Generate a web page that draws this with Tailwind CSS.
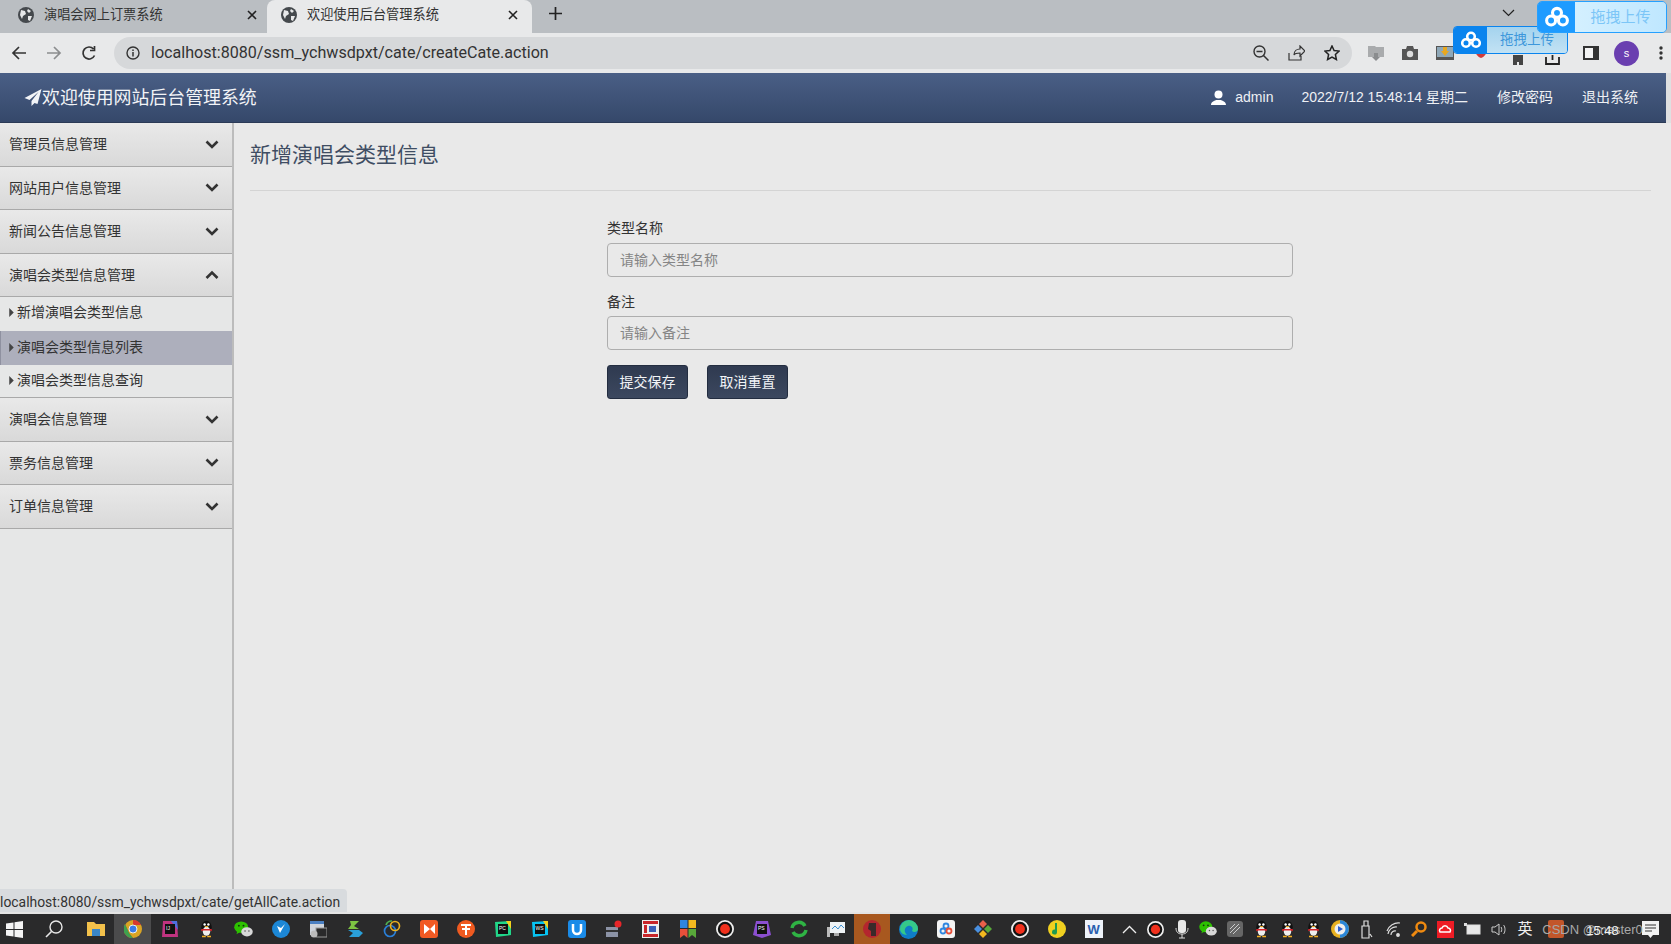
<!DOCTYPE html>
<html lang="zh-CN">
<head>
  <meta charset="UTF-8" />
  <title>欢迎使用后台管理系统</title>
  <script src="https://cdn.jsdelivr.net/npm/@tailwindcss/browser@4"></script>
</head>
<body class="relative h-[944px] w-[1671px] overflow-hidden flex flex-col bg-[#e9e9e9] text-[#333] font-['Liberation_Sans','Noto_Sans_CJK_SC',sans-serif]">

  <svg width="0" height="0" class="absolute">
    <defs>
      <symbol id="globe" viewBox="0 0 16 16"><circle cx="8" cy="8" r="8" fill="#45494d"/><path d="M3 3l4 1 1 3-3 2-1 3-2-4zM10 2l3 2-2 2-2-2zM10 9l4 0-2 5-2-1z" fill="#e8e9ea"/></symbol>
      <symbol id="qq" viewBox="0 0 20 24"><ellipse cx="10" cy="10" rx="7" ry="9" fill="#111"/><ellipse cx="10" cy="15" rx="5" ry="6" fill="#eee"/><circle cx="7.5" cy="6" r="1.6" fill="#fff"/><circle cx="12.5" cy="6" r="1.6" fill="#fff"/><path d="M7 8h6l-3 2z" fill="#f5b021"/><path d="M3 12h14v3l-3-1H6l-3 1z" fill="#d8232a"/><path d="M4 21h5v2H4zM11 21h5v2h-5z" fill="#f5b021"/></symbol>
      <symbol id="wechat" viewBox="0 0 24 22"><ellipse cx="9" cy="8" rx="9" ry="7.5" fill="#2dc100"/><path d="M4 13l-1 4 5-3z" fill="#2dc100"/><ellipse cx="16.5" cy="14" rx="7.5" ry="6" fill="#d8d8d8"/><circle cx="6" cy="6" r="1.2" fill="#12300a"/><circle cx="12" cy="6" r="1.2" fill="#12300a"/><circle cx="14" cy="13" r="1" fill="#555"/><circle cx="19" cy="13" r="1" fill="#555"/></symbol>
      <symbol id="rec" viewBox="0 0 20 20"><circle cx="10" cy="10" r="9" fill="#111" stroke="#eee" stroke-width="2"/><circle cx="10" cy="10" r="5.5" fill="#f0301c"/></symbol>
    </defs>
  </svg>

  <!-- browser tabs -->
  <div class="h-[33px] shrink-0 bg-[#babec2] flex items-end text-[13.2px] text-[#333]">
    <div class="w-[267px] h-[33px] flex items-center pl-[18px] pr-[10px]">
      <svg class="w-[16px] h-[16px] mr-[10px] -mt-1"><use href="#globe"/></svg>
      <span class="-mt-1">演唱会网上订票系统</span>
      <svg class="ml-auto -mt-1" width="10" height="10" viewBox="0 0 10 10"><path d="M1 1l8 8M9 1l-8 8" stroke="#222" stroke-width="1.6"/></svg>
    </div>
    <div class="w-[265px] h-[33px] bg-[#e8e9ea] rounded-t-lg flex items-center pl-[14px] pr-[14px]">
      <svg class="w-[16px] h-[16px] mr-[10px] -mt-1"><use href="#globe"/></svg>
      <span class="-mt-1">欢迎使用后台管理系统</span>
      <svg class="ml-auto -mt-1" width="10" height="10" viewBox="0 0 10 10"><path d="M1 1l8 8M9 1l-8 8" stroke="#222" stroke-width="1.6"/></svg>
    </div>
    <svg class="ml-[17px] mb-[13px]" width="13" height="13" viewBox="0 0 13 13"><path d="M6.5 0v13M0 6.5h13" stroke="#222" stroke-width="1.7"/></svg>
    <svg class="ml-[940px] mb-[16px]" width="13" height="8" viewBox="0 0 13 8"><path d="M1 1l5.5 5.5L12 1" fill="none" stroke="#222" stroke-width="1.2"/></svg>
  </div>

  <!-- browser toolbar -->
  <div class="h-[40px] shrink-0 bg-[#e8e9ea] flex items-center">
    <svg class="ml-[11px]" width="16" height="16" viewBox="0 0 16 16"><path d="M15 8H2M8 2L2 8l6 6" fill="none" stroke="#333" stroke-width="1.7"/></svg>
    <svg class="ml-[19px]" width="16" height="16" viewBox="0 0 16 16"><path d="M1 8h13M8 2l6 6-6 6" fill="none" stroke="#8b8d8f" stroke-width="1.7"/></svg>
    <svg class="ml-[19px]" width="16" height="16" viewBox="0 0 16 16"><path d="M13.5 10.5A6 6 0 1 1 12.5 4M13.5 1v4.5H9" fill="none" stroke="#333" stroke-width="1.7"/></svg>
    <div class="ml-[17px] w-[1238px] h-[32px] rounded-full bg-[#d6d8da] flex items-center pl-[12px] pr-[12px]">
      <svg width="14" height="14" viewBox="0 0 14 14"><circle cx="7" cy="7" r="6" fill="none" stroke="#333" stroke-width="1.4"/><path d="M7 6v4.500M7 3.500v1.500" stroke="#333" stroke-width="1.5"/></svg>
      <span class="ml-[11px] text-[16.1px] text-[#333] font-['Roboto',sans-serif]">localhost:8080/ssm_ychwsdpxt/cate/createCate.action</span>
      <svg class="ml-auto mr-[19px]" width="16" height="16" viewBox="0 0 16 16"><circle cx="6.500" cy="6.500" r="5.500" fill="none" stroke="#333" stroke-width="1.4"/><path d="M3.500 6.500h6M10.500 10.500l5 5" stroke="#333" stroke-width="1.500"/></svg>
      <svg class="mr-[19px]" width="17" height="16" viewBox="0 0 17 16"><path d="M1 8v7h12v-4M6 10c0-4 3-6 6-6V1l5 5-5 5V8c-3 0-5 0-6 2z" fill="none" stroke="#333" stroke-width="1.200"/></svg>
      <svg width="16" height="16" viewBox="0 0 16 16"><path d="M8 1l2.100 4.600 5 .5-3.700 3.400 1 5L8 12l-4.400 2.500 1-5L.9 6.100l5-.5z" fill="none" stroke="#222" stroke-width="1.500"/></svg>
    </div>
    <svg class="ml-[15px]" width="18" height="18" viewBox="0 0 18 18"><path d="M1 2h7l1 1h8v10H1z" fill="#a9abad"/><path d="M7 9h4v4h2l-4 4-4-4h2z" fill="#8a8c8e"/></svg>
    <svg class="ml-[17px]" width="16" height="14" viewBox="0 0 16 14"><path d="M0 3h4l1-3h6l1 3h4v11H0z" fill="#555"/><circle cx="8" cy="8" r="3.200" fill="#ddd"/></svg>
    <svg class="ml-[18px]" width="18" height="14" viewBox="0 0 18 14"><rect width="18" height="14" fill="#555"/><rect x="1" y="1" width="16" height="10" fill="#8fa8b8"/><path d="M7 1h4v4h2l-4 5-4-5h2z" fill="#e8a820"/></svg>
    <svg class="ml-[21px]" width="12" height="9" viewBox="0 0 12 9"><path d="M0 0h12c0 5-3 8-6 9-3-1-6-4-6-9z" fill="#d03a3a"/></svg>
    <svg class="ml-[24px] mt-[14px]" width="14" height="10" viewBox="0 0 14 10"><path d="M2 0h10v10H8V7H6v3H2z" fill="#444"/></svg>
    <svg class="ml-[20px] mt-[14px]" width="15" height="10" viewBox="0 0 15 10"><path d="M1 2v7h13V2M7.500 0v5" fill="none" stroke="#222" stroke-width="1.800"/></svg>
    <svg class="ml-[23px]" width="16" height="14" viewBox="0 0 16 14"><path d="M1 1h14v12H1z" fill="#f4f4f4" stroke="#333" stroke-width="2"/><rect x="10" y="1" width="5" height="12" fill="#333"/></svg>
    <div class="ml-[15px] w-[25px] h-[25px] rounded-full bg-[#6a3fb0] text-white text-[11px] flex items-center justify-center">s</div>
    <svg class="ml-[20px]" width="4" height="14" viewBox="0 0 4 14"><circle cx="2" cy="2" r="1.700" fill="#333"/><circle cx="2" cy="7" r="1.700" fill="#333"/><circle cx="2" cy="12" r="1.700" fill="#333"/></svg>
  </div>

  <!-- site header -->
  <header class="h-[50px] shrink-0 mr-[5px] bg-gradient-to-b from-[#4a5f86] to-[#35486a] border-b border-[#2b3a56] flex items-center text-white pl-[24px]">
    <svg width="18" height="17" viewBox="0 0 17 17"><path d="M17 0L0 9l5 2 9-8-7 9v5l3-3 3 1z" fill="#f2f4f7"/></svg>
    <span class="pt-[1px] text-[17.9px] text-[#f2f4f7]">欢迎使用网站后台管理系统</span>
    <div class="ml-auto flex items-center text-[14px] text-[#eef0f4] pr-[28px]">
      <svg class="mr-[9px]" width="15" height="15" viewBox="0 0 15 15"><circle cx="7.500" cy="4.500" r="4" fill="#fff"/><path d="M0 15c0-3 3-4 5-5h5c2 1 5 2 5 5z" fill="#fff"/></svg>
      <span>admin</span>
      <span class="ml-[28px]">2022/7/12 15:48:14 星期二</span>
      <span class="ml-[29px]">修改密码</span>
      <span class="ml-[29px]">退出系统</span>
    </div>
  </header>

  <div class="flex-1 flex min-h-0">
    <!-- side menu -->
    <aside class="w-[234px] shrink-0 bg-[#e6e7e7] border-r-2 border-[#bcbcbc] text-[14px] text-[#333]">
      <div class="h-[44px] pl-[9px] pr-[13px] flex items-center justify-between bg-gradient-to-b from-[#e9e9e9] to-[#d9d9d9] border-b border-[#a9a9a9]">
        <span>管理员信息管理</span>
        <svg width="14" height="10" viewBox="0 0 14 10"><path d="M1.500 1.500L7 7l5.500-5.500" fill="none" stroke="#333" stroke-width="2.600"/></svg>
      </div>
      <div class="h-[43px] pl-[9px] pr-[13px] flex items-center justify-between bg-gradient-to-b from-[#e9e9e9] to-[#d9d9d9] border-b border-[#a9a9a9]">
        <span>网站用户信息管理</span>
        <svg width="14" height="10" viewBox="0 0 14 10"><path d="M1.500 1.500L7 7l5.500-5.500" fill="none" stroke="#333" stroke-width="2.600"/></svg>
      </div>
      <div class="h-[44px] pl-[9px] pr-[13px] flex items-center justify-between bg-gradient-to-b from-[#e9e9e9] to-[#d9d9d9] border-b border-[#a9a9a9]">
        <span>新闻公告信息管理</span>
        <svg width="14" height="10" viewBox="0 0 14 10"><path d="M1.500 1.500L7 7l5.500-5.500" fill="none" stroke="#333" stroke-width="2.600"/></svg>
      </div>
      <div class="h-[43px] pl-[9px] pr-[13px] flex items-center justify-between bg-gradient-to-b from-[#e9e9e9] to-[#d9d9d9] border-b border-[#a9a9a9]">
        <span>演唱会类型信息管理</span>
        <svg width="14" height="10" viewBox="0 0 14 10"><path d="M1.500 8L7 2.500 12.500 8" fill="none" stroke="#333" stroke-width="2.600"/></svg>
      </div>
      <div class="h-[34px] pl-[9px] pb-[3px] flex items-center">
        <svg class="mr-[3px]" width="5" height="9" viewBox="0 0 4 8"><path d="M0 0l4 4-4 4z" fill="#444"/></svg>新增演唱会类型信息
      </div>
      <div class="h-[34px] pl-[9px] pb-[2px] flex items-center bg-[#adafbc] border-l border-[#8f91a0]">
        <svg class="mr-[3px] -ml-px" width="5" height="9" viewBox="0 0 4 8"><path d="M0 0l4 4-4 4z" fill="#444"/></svg>演唱会类型信息列表
      </div>
      <div class="h-[33px] pl-[9px] pb-[1px] flex items-center border-b border-[#a9a9a9]">
        <svg class="mr-[3px]" width="5" height="9" viewBox="0 0 4 8"><path d="M0 0l4 4-4 4z" fill="#444"/></svg>演唱会类型信息查询
      </div>
      <div class="h-[44px] pl-[9px] pr-[13px] flex items-center justify-between bg-gradient-to-b from-[#e9e9e9] to-[#d9d9d9] border-b border-[#a9a9a9]">
        <span>演唱会信息管理</span>
        <svg width="14" height="10" viewBox="0 0 14 10"><path d="M1.500 1.500L7 7l5.500-5.500" fill="none" stroke="#333" stroke-width="2.600"/></svg>
      </div>
      <div class="h-[43px] pl-[9px] pr-[13px] flex items-center justify-between bg-gradient-to-b from-[#e9e9e9] to-[#d9d9d9] border-b border-[#a9a9a9]">
        <span>票务信息管理</span>
        <svg width="14" height="10" viewBox="0 0 14 10"><path d="M1.500 1.500L7 7l5.500-5.500" fill="none" stroke="#333" stroke-width="2.600"/></svg>
      </div>
      <div class="h-[44px] pl-[9px] pr-[13px] flex items-center justify-between bg-gradient-to-b from-[#e9e9e9] to-[#d9d9d9] border-b border-[#a9a9a9]">
        <span>订单信息管理</span>
        <svg width="14" height="10" viewBox="0 0 14 10"><path d="M1.500 1.500L7 7l5.500-5.500" fill="none" stroke="#333" stroke-width="2.600"/></svg>
      </div>
    </aside>

    <!-- main content -->
    <main class="flex-1 pl-[16px] pr-[20px]">
      <h1 class="h-[68px] border-b border-[#d4d4d4] pt-[17px] text-[21px] leading-[30px] text-[#3f4d63]">新增演唱会类型信息</h1>
      <form class="ml-[357px] w-[686px] pt-[27px] text-[14px]">
        <label class="block h-[20px] leading-[20px] text-[#333]">类型名称</label>
        <input type="text" placeholder="请输入类型名称" class="mt-[5px] block w-full h-[34px] px-[12px] bg-[#e9e9e9] border border-[#aeaeae] rounded-[4px] placeholder:text-[#858585]" />
        <label class="mt-[15px] block h-[20px] leading-[20px] text-[#333]">备注</label>
        <input type="text" placeholder="请输入备注" class="mt-[4px] block w-full h-[34px] px-[12px] bg-[#e9e9e9] border border-[#aeaeae] rounded-[4px] placeholder:text-[#858585]" />
        <div class="mt-[15px] flex gap-[19px]">
          <button type="button" class="w-[81px] h-[34px] rounded-[3px] border border-[#232d40] bg-gradient-to-b from-[#2f3a50] to-[#3c485f] text-[#f2f4f7]">提交保存</button>
          <button type="button" class="w-[81px] h-[34px] rounded-[3px] border border-[#232d40] bg-gradient-to-b from-[#2f3a50] to-[#3c485f] text-[#f2f4f7]">取消重置</button>
        </div>
      </form>
    </main>
  </div>

  <!-- windows taskbar -->
  <footer class="h-[32px] shrink-0 bg-[#2a2a2b] border-t-2 border-[#e4e4e4] flex items-center">
    <svg class="ml-[6px]" width="17" height="17" viewBox="0 0 17 17"><path d="M0 2.500l7.500-1v6.500H0zM8.500 1.300L17 0v8H8.500zM0 9h7.500v6.500L0 14.500zM8.500 9H17v8l-8.500-1.200z" fill="#f4f4f4"/></svg>
    <svg class="ml-[22px]" width="18" height="18" viewBox="0 0 18 18"><circle cx="11" cy="7" r="6" fill="none" stroke="#e8e8e8" stroke-width="1.400"/><path d="M6.500 11.500L1 17" stroke="#e8e8e8" stroke-width="1.600"/></svg>
    <div class="ml-[14px] w-[37px] flex justify-center"><svg width="18" height="16" viewBox="0 0 18 16"><path d="M0 1h7l2 2h9v12H0z" fill="#f3c14b"/><rect x="5" y="8" width="8" height="7" fill="#3a86c8"/></svg></div>
    <div class="w-[37px] h-[30px] bg-[#4b4b4c] flex items-center justify-center"><svg width="18" height="18" viewBox="0 0 18 18"><circle cx="9" cy="9" r="9" fill="#d9a425"/><path d="M9 0a9 9 0 0 1 8 5H9zM1 4l4 9 4 5a9 9 0 0 1-8-14z" fill="#d8392f"/><path d="M1 4l4 9 4 5a9 9 0 0 1-8-14z" fill="#3ea14f"/><circle cx="9" cy="9" r="4" fill="#3a7be8" stroke="#eee"/></svg></div>
    <div class="w-[37px] flex justify-center"><svg width="18" height="18" viewBox="0 0 18 18"><path d="M2 1h14l1 16H1z" fill="#c0337f"/><path d="M10 1h6l1 9z" fill="#4d6fe0"/><rect x="4" y="4" width="10" height="10" fill="#111"/><text x="5" y="10" font-size="5" fill="#fff">IJ</text></svg></div>
    <div class="w-[37px] flex justify-center"><svg width="15" height="18"><use href="#qq"/></svg></div>
    <div class="w-[37px] flex justify-center"><svg width="19" height="17"><use href="#wechat"/></svg></div>
    <div class="w-[37px] flex justify-center"><svg width="18" height="18" viewBox="0 0 18 18"><circle cx="9" cy="9" r="9" fill="#1c87d6"/><path d="M5 6l3 7 5-9-4 4z" fill="#fff"/></svg></div>
    <div class="w-[37px] flex justify-center"><svg width="18" height="18" viewBox="0 0 18 18"><rect x="1" y="1" width="14" height="14" fill="#cfd4dc"/><rect x="1" y="1" width="14" height="3" fill="#4a7fc2"/><rect x="7" y="8" width="11" height="9" fill="#2a2a2b" stroke="#999"/><circle cx="5" cy="14" r="3.500" fill="#bbb"/></svg></div>
    <div class="w-[37px] flex justify-center"><svg width="18" height="18" viewBox="0 0 18 18"><path d="M4 1l9 0-5 5 5 3H2l3-4z" fill="#7dc242"/><path d="M2 10h11l4 3-4 4H3l4-4z" fill="#2a9fd8"/></svg></div>
    <div class="w-[37px] flex justify-center"><svg width="18" height="18" viewBox="0 0 18 18" fill="none" stroke-width="1.700"><circle cx="7" cy="11" r="5.500" stroke="#2a7fd8"/><circle cx="12" cy="6" r="4.500" stroke="#e8b020"/><path d="M3 5a6 6 0 0 1 6-4" stroke="#50b050"/></svg></div>
    <div class="w-[37px] flex justify-center"><svg width="18" height="18" viewBox="0 0 18 18"><rect width="18" height="18" rx="3" fill="#f15a24"/><path d="M4 4l6 5-6 5zM10 9l5-5v10z" fill="#fff"/></svg></div>
    <div class="w-[37px] flex justify-center"><svg width="18" height="18" viewBox="0 0 18 18"><circle cx="9" cy="9" r="9" fill="#ef5a20"/><path d="M4 5h10M9 5v10M5 9h8" stroke="#fff" stroke-width="2" fill="none"/></svg></div>
    <div class="w-[37px] flex justify-center"><svg width="18" height="18" viewBox="0 0 18 18"><path d="M1 2l16-1v14L2 17z" fill="#21d789"/><path d="M12 1h5v8z" fill="#f5d21c"/><rect x="4" y="4" width="10" height="10" fill="#111"/><text x="5" y="10" font-size="5" fill="#fff">PC</text></svg></div>
    <div class="w-[37px] flex justify-center"><svg width="18" height="18" viewBox="0 0 18 18"><path d="M1 2l16-1v14L2 17z" fill="#07c3f2"/><path d="M12 1h5v8z" fill="#f5d21c"/><rect x="4" y="4" width="10" height="10" fill="#111"/><text x="4.500" y="10" font-size="5" fill="#fff">WS</text></svg></div>
    <div class="w-[37px] flex justify-center"><svg width="18" height="18" viewBox="0 0 18 18"><rect width="18" height="18" rx="3" fill="#1a8be8"/><path d="M5 4v6a4 4 0 0 0 8 0V4" fill="none" stroke="#fff" stroke-width="2.500"/></svg></div>
    <div class="w-[37px] flex justify-center"><svg width="18" height="18" viewBox="0 0 18 18"><rect x="1" y="7" width="12" height="10" fill="#8c93a6"/><rect x="1" y="10" width="12" height="2" fill="#333"/><circle cx="13" cy="4" r="3.500" fill="#e8262a"/></svg></div>
    <div class="w-[37px] flex justify-center"><svg width="17" height="18" viewBox="0 0 17 18"><rect width="17" height="18" fill="#eee"/><path d="M1 1h15v3H1zM1 14h15v3H1zM2 5h3v8H2z" fill="#c8252a"/><path d="M7 6h7v6H7z" fill="#3a5fb8"/></svg></div>
    <div class="w-[37px] flex justify-center"><svg width="16" height="18" viewBox="0 0 16 18"><rect width="7.500" height="8" fill="#2f86e0"/><rect x="8.500" width="7.500" height="8" fill="#f2b81f"/><path d="M0 9h7.500v9L4 15l-4 3z" fill="#e8503a"/><path d="M8.500 9H16v9l-4-3-3.500 3z" fill="#58a83a"/></svg></div>
    <div class="w-[37px] flex justify-center"><svg width="18" height="18"><use href="#rec"/></svg></div>
    <div class="w-[37px] flex justify-center"><svg width="18" height="18" viewBox="0 0 18 18"><path d="M3 1l12 0 3 14-9 3-9-3z" fill="#8b4fd0"/><rect x="4" y="4" width="10" height="10" fill="#111"/><text x="5" y="10" font-size="5" fill="#fff">PS</text></svg></div>
    <div class="w-[37px] flex justify-center"><svg width="18" height="18" viewBox="0 0 18 18" fill="none" stroke="#2fb344" stroke-width="3.500"><path d="M2 8a7 7 0 0 1 13-2"/><path d="M16 10a7 7 0 0 1-13 2"/></svg></div>
    <div class="w-[37px] flex justify-center"><svg width="18" height="18" viewBox="0 0 18 18"><rect x="3" y="2" width="15" height="11" fill="#eef2f5"/><path d="M5 9l3-3 3 3 3-4 3 3" fill="none" stroke="#3a8ed0"/><rect y="7" width="3" height="10" fill="#bbb"/><path d="M7 13h5v3H7z" fill="#aaa"/></svg></div>
    <div class="w-[36px] h-[30px] bg-[#a8581f] flex items-center justify-center"><svg width="18" height="18" viewBox="0 0 18 18"><circle cx="9" cy="9" r="9" fill="#b4262e"/><path d="M6 3h7v13H8V11L5 9z" fill="#3a2a2a"/></svg></div>
    <div class="w-[37px] flex justify-center"><svg width="19" height="19" viewBox="0 0 19 19"><circle cx="9.500" cy="9.500" r="9.500" fill="#0f7dc8"/><path d="M1 9a9 9 0 0 1 18 0c0 3-4 4-6 2 2-3-1-6-4-5s-5 5-1 9c-4 0-7-3-7-6z" fill="#35c98a"/></svg></div>
    <div class="w-[37px] flex justify-center"><svg width="18" height="18" viewBox="0 0 18 18"><rect width="18" height="18" rx="3" fill="#f4f4f4"/><g fill="none" stroke-width="1.800"><circle cx="9" cy="6" r="2.500" stroke="#2f86e0"/><circle cx="6" cy="11" r="2.500" stroke="#2f86e0"/><circle cx="12" cy="11" r="2.500" stroke="#e8503a"/></g></svg></div>
    <div class="w-[37px] flex justify-center"><svg width="18" height="18" viewBox="0 0 18 18"><path d="M9 0l4 4-4 4-4-4z" fill="#e8604a"/><path d="M4 5l4 4-4 4-4-4z" fill="#4a90e0"/><path d="M14 5l4 4-4 4-4-4z" fill="#58a83a"/><path d="M9 10l4 4-4 4-4-4z" fill="#f2b81f"/></svg></div>
    <div class="w-[37px] flex justify-center"><svg width="18" height="18"><use href="#rec"/></svg></div>
    <div class="w-[37px] flex justify-center"><svg width="18" height="18" viewBox="0 0 18 18"><circle cx="9" cy="9" r="9" fill="#f0d020"/><path d="M9 3v9a2.500 2.500 0 1 1-2-2.400V3z" fill="#1f9a50"/></svg></div>
    <div class="w-[37px] flex justify-center"><svg width="18" height="18" viewBox="0 0 18 18"><rect width="18" height="18" fill="#eef3fa"/><text x="2.500" y="14" font-size="13" font-weight="700" fill="#2a5fb0">W</text></svg></div>

    <!-- tray -->
    <div class="ml-[4px] flex items-center">
      <div class="w-[26.4px] flex justify-center"><svg width="15" height="9" viewBox="0 0 15 9"><path d="M1 8l6.500-6.500L14 8" fill="none" stroke="#eee" stroke-width="1.300"/></svg></div>
      <div class="w-[26.4px] flex justify-center"><svg width="17" height="17"><use href="#rec"/></svg></div>
      <div class="w-[26.4px] flex justify-center"><svg width="14" height="19" viewBox="0 0 14 19"><rect x="3" width="8" height="13" rx="3" fill="#e8e8e8"/><path d="M1 8c0 4 2 6 6 6s6-2 6-6M7 14v4M4 18h6" fill="none" stroke="#ddd"/></svg></div>
      <div class="w-[26.4px] flex justify-center"><svg width="18" height="16"><use href="#wechat"/></svg></div>
      <div class="w-[26.4px] flex justify-center"><svg width="16" height="16" viewBox="0 0 16 16"><rect width="16" height="16" rx="3" fill="#666"/><path d="M3 12l9-9M6 13l7-7M3 8l5-5" stroke="#ccc"/></svg></div>
      <div class="w-[26.4px] flex justify-center"><svg width="15" height="18"><use href="#qq"/></svg></div>
      <div class="w-[26.4px] flex justify-center"><svg width="15" height="18"><use href="#qq"/></svg></div>
      <div class="w-[26.4px] flex justify-center"><svg width="15" height="18"><use href="#qq"/></svg></div>
      <div class="w-[26.4px] flex justify-center"><svg width="18" height="18" viewBox="0 0 18 18"><circle cx="9" cy="9" r="9" fill="#e8b020"/><path d="M9 0a9 9 0 0 1 0 18z" fill="#2a86d8"/><circle cx="9" cy="9" r="5.500" fill="#eee"/><path d="M7 6l5 3-5 3z" fill="#2a5fd0"/></svg></div>
      <div class="w-[26.4px] flex justify-center"><svg width="12" height="19" viewBox="0 0 12 19"><path d="M1 6h7v12H1zM3 6V1h4v5M9 14l2 3" fill="none" stroke="#ddd" stroke-width="1.200"/></svg></div>
      <div class="w-[26.4px] flex justify-center"><svg width="15" height="15" viewBox="0 0 15 15" fill="none" stroke="#ddd" stroke-width="1.200"><path d="M1 9a12 12 0 0 1 13-8M2 12a8 8 0 0 1 9-7M5 13a4 4 0 0 1 5-4"/><circle cx="12" cy="13" r="1.300" fill="#ddd"/></svg></div>
      <div class="w-[26.4px] flex justify-center"><svg width="16" height="16" viewBox="0 0 16 16" fill="none"><circle cx="10" cy="6" r="4.500" stroke="#f08a10" stroke-width="2.500"/><path d="M6 10l-5 5" stroke="#f08a10" stroke-width="3"/></svg></div>
      <div class="w-[26.4px] flex justify-center"><svg width="17" height="17" viewBox="0 0 17 17"><rect width="17" height="17" fill="#ee1c25"/><path d="M3 11a2.500 2.500 0 0 1 2-4c1-3 5-3 6 0a2.500 2.500 0 0 1 2 4z" fill="none" stroke="#fff" stroke-width="1.500"/></svg></div>
      <div class="w-[26.4px] flex justify-center"><svg width="17" height="12" viewBox="0 0 17 12"><rect x="3" y="2" width="13" height="9" fill="#e8e8e8" stroke="#ddd"/><path d="M0 0h3v3H0z" fill="#ddd"/></svg></div>
      <div class="w-[26.4px] flex justify-center"><svg width="15" height="13" viewBox="0 0 15 13" fill="none" stroke="#ccc"><path d="M1 4h3l4-3v11L4 9H1zM10 4c1 1 1 4 0 5M12.500 2c2 2 2 7 0 9"/></svg></div>
      <div class="w-[26.4px] flex justify-center text-[15px] text-[#eee]">英</div>
    </div>
    <div class="relative ml-[4px] w-[100px] h-[28px] text-[13px]">
      <span class="absolute left-[6px] top-[5px] w-[16px] h-[18px] bg-[#e8622a]/80 rounded-[2px]"></span>
      <span class="absolute left-0 top-[5px] text-[#a8a8a8] whitespace-nowrap">CSDN @master0</span>
      <span class="absolute left-[44px] top-[6px] text-[#f0f0f0]">15:48</span>
    </div>
    <svg width="17" height="17" viewBox="0 0 17 17"><path d="M0 0h17v14h-6l-2.500 3L6 14H0z" fill="#f2f2f2"/><path d="M3 4h11M3 7h11M3 10h7" stroke="#333"/></svg>
  </footer>

  <!-- link status bubble, over the page -->
  <div class="absolute left-0 top-[889px] w-[347px] h-[23px] bg-[#d8dbde] rounded-tr-[4px] text-[13.9px] leading-[27px] text-[#333] font-['Roboto',sans-serif]">localhost:8080/ssm_ychwsdpxt/cate/getAllCate.action</div>

  <!-- cloud upload widgets, over the browser chrome -->
  <div class="absolute left-[1453px] top-[26px] w-[115px] h-[28px] flex rounded-[4px] overflow-hidden border border-[#0a84ee]">
    <div class="w-[33px] bg-[#0a84ee] flex items-center justify-center">
      <svg width="22" height="18" viewBox="0 0 22 18" fill="none" stroke="#fff" stroke-width="2.600"><circle cx="11" cy="5.500" r="3.800"/><circle cx="6" cy="12" r="3.800"/><circle cx="16" cy="12" r="3.800"/></svg>
    </div>
    <div class="flex-1 bg-gradient-to-b from-[#a4d3ee] to-[#c2e2f4] flex items-center justify-center text-[13.500px] text-[#3d97db]">拖拽上传</div>
  </div>
  <div class="absolute left-[1537px] top-[1px] w-[130px] h-[32px] flex rounded-[5px] overflow-hidden border border-[#25a0ff]">
    <div class="w-[37px] bg-[#1e9bff] flex items-center justify-center">
      <svg width="26" height="22" viewBox="0 0 22 18" fill="none" stroke="#fff" stroke-width="2.600"><circle cx="11" cy="5.500" r="3.800"/><circle cx="6" cy="12" r="3.800"/><circle cx="16" cy="12" r="3.800"/></svg>
    </div>
    <div class="flex-1 bg-gradient-to-r from-[#d4f0ff] to-[#bfe7ff] flex items-center justify-center text-[15px] text-[#7cc6f7]">拖拽上传</div>
  </div>

  <!-- scrollbar edge -->
  <div class="absolute right-0 top-[73px] w-[5px] h-[50px] bg-[#dfe0e1]"></div>
</body>
</html>
